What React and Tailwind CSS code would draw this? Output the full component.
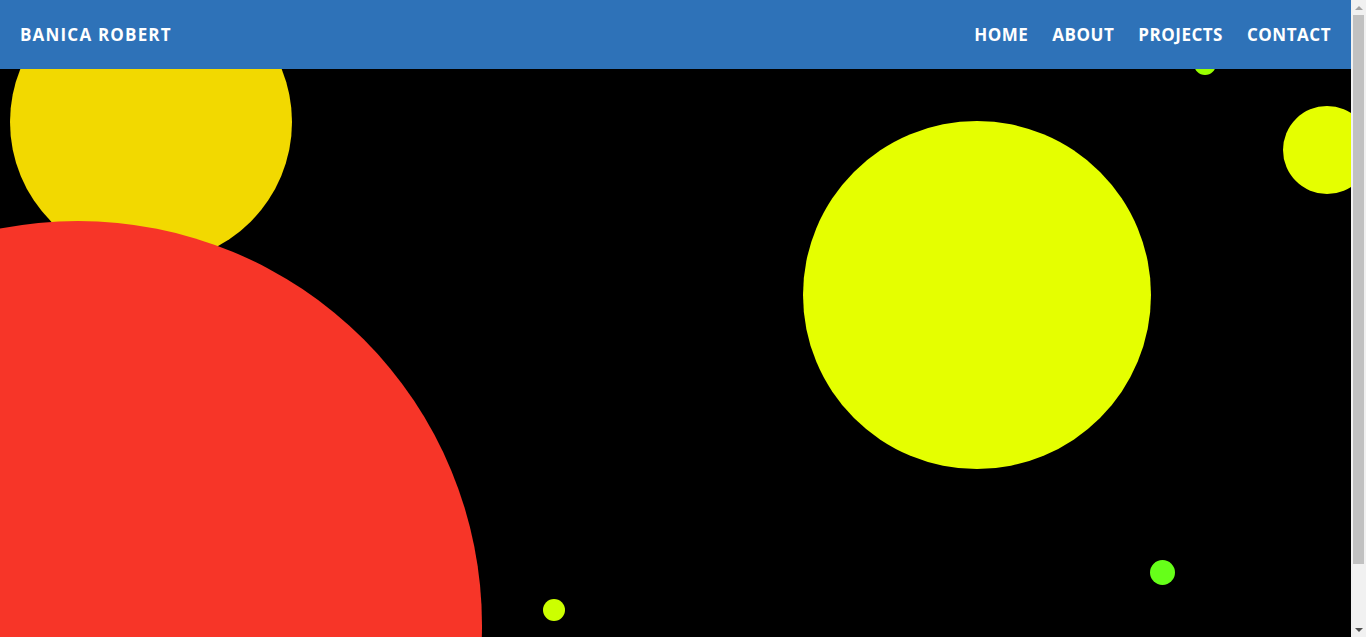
const bubbles = [
  { left: 10, top: -88, size: 282, color: 'bg-[#f2d900]' },
  { left: -326, top: 152, size: 808, color: 'bg-[#f73528]' },
  { left: 803, top: 52, size: 348, color: 'bg-[#e5ff00]' },
  { left: 1283, top: 37, size: 88, color: 'bg-[#e5ff00]' },
  { left: 1194, top: -16, size: 22, color: 'bg-[#99ff00]' },
  { left: 1150, top: 491, size: 25, color: 'bg-[#66ff19]' },
  { left: 543, top: 530, size: 22, color: 'bg-[#ccff00]' },
]

const links = ['HOME', 'ABOUT', 'PROJECTS', 'CONTACT']

function Scrollbar() {
  // classic browser scrollbar drawn in place of the real one
  return (
    <div className="flex h-screen w-[15px] shrink-0 flex-col bg-[#f1f1f1]">
      <div className="flex h-[15px] items-center justify-center">
        <span className="h-0 w-0 border-x-[4px] border-b-[4px] border-x-transparent border-b-[#a3a3a3]" />
      </div>
      <div className="mx-[2px] h-[549px] rounded-none bg-[#c1c1c1]" />
      <div className="flex-1" />
      <div className="flex h-[15px] items-center justify-center">
        <span className="h-0 w-0 border-x-[4px] border-t-[4px] border-x-transparent border-t-[#505050]" />
      </div>
    </div>
  )
}

export default function App() {
  return (
    <div className="flex h-screen overflow-hidden bg-black" style={{ fontFamily: '"Open Sans", "Liberation Sans", sans-serif' }}>
      <div className="flex min-w-0 flex-1 flex-col">
        <nav className="relative z-10 flex h-[69px] shrink-0 items-center justify-between bg-[#2e72b8] px-5 text-white">
          <a href="#" className="text-[17px] font-bold tracking-[0.07em]">BANICA ROBERT</a>
          <ul className="flex gap-6 text-[17px] font-bold tracking-[0.03em]">
            {links.map((l) => (
              <li key={l}>
                <a href="#">{l}</a>
              </li>
            ))}
          </ul>
        </nav>
        <section className="relative flex-1 overflow-hidden bg-black">
          {bubbles.map((b, i) => (
            <span
              key={i}
              className={`absolute rounded-full ${b.color}`}
              style={{ left: b.left, top: b.top, width: b.size, height: b.size }}
            />
          ))}
        </section>
      </div>
      <Scrollbar />
    </div>
  )
}
